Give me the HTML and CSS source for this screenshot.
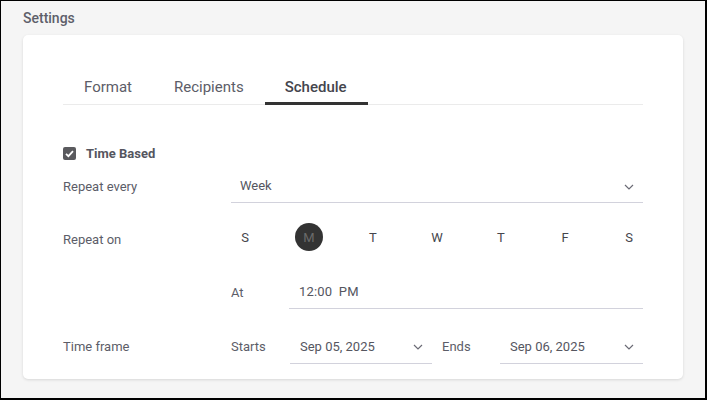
FILE: index.html
```html
<!DOCTYPE html>
<html>
<head>
<meta charset="utf-8">
<link rel="stylesheet" href="styles.css">
</head>
<body>
<div class="frame">
  <div class="page-title">Settings</div>
  <div class="card">
    <div class="tabs">
      <div class="tab">Format</div>
      <div class="tab">Recipients</div>
      <div class="tab active">Schedule</div>
    </div>
    <div class="form">
      <div class="check-row">
        <span class="checkbox"><svg width="13" height="13" viewBox="0 0 13 13"><path d="M3 6.8 L5.4 9.1 L10 4.2" fill="none" stroke="#fff" stroke-width="1.8"/></svg></span>
        <span class="check-label">Time Based</span>
      </div>
      <div class="row row-every">
        <div class="label">Repeat every</div>
        <div class="field select"><span>Week</span><svg class="chev" width="10" height="6" viewBox="0 0 10 6"><path d="M1 1 L5 5 L9 1" fill="none" stroke="#6b6b75" stroke-width="1.2"/></svg></div>
      </div>
      <div class="row row-on">
        <div class="label label-on">Repeat on</div>
        <div class="days">
          <span class="day">S</span>
          <span class="day selected">M</span>
          <span class="day">T</span>
          <span class="day">W</span>
          <span class="day">T</span>
          <span class="day">F</span>
          <span class="day">S</span>
        </div>
      </div>
      <div class="row row-at">
        <div class="label"></div>
        <div class="inline">
          <span class="sub-label">At</span>
          <div class="field grow"><span class="time">12:00 PM</span></div>
        </div>
      </div>
      <div class="row row-frame">
        <div class="label">Time frame</div>
        <div class="inline">
          <span class="sub-label">Starts</span>
          <div class="field date"><span>Sep 05, 2025</span><svg class="chev" width="10" height="6" viewBox="0 0 10 6"><path d="M1 1 L5 5 L9 1" fill="none" stroke="#6b6b75" stroke-width="1.2"/></svg></div>
          <span class="sub-label ends">Ends</span>
          <div class="field date"><span>Sep 06, 2025</span><svg class="chev" width="10" height="6" viewBox="0 0 10 6"><path d="M1 1 L5 5 L9 1" fill="none" stroke="#6b6b75" stroke-width="1.2"/></svg></div>
        </div>
      </div>
    </div>
  </div>
</div>
</body>
</html>
```
FILE: styles.css
```css
* { box-sizing: border-box; }
html, body { margin: 0; padding: 0; }
body {
  font-family: Roboto, "Liberation Sans", Arial, sans-serif;
  color: #5c5d68;
}
.frame {
  width: 707px;
  height: 400px;
  background: #f5f5f5;
  border-style: solid;
  border-color: #000;
  border-width: 1px 2px 2px 1px;
  padding: 7px 0 0 22px;
}
.page-title {
  font-size: 14px;
  font-weight: 500;
  line-height: 20px;
  color: #5e5f6a;
}
.card {
  margin-top: 7px;
  width: 660px;
  height: 344px;
  background: #fff;
  border-radius: 5px;
  box-shadow: 0 1px 3px rgba(0,0,0,0.12);
  padding: 42px 40px 0 40px;
}
.tabs {
  display: flex;
  border-bottom: 1px solid #ebebeb;
}
.tab {
  font-size: 15px;
  line-height: 20px;
  padding: 0 21px 7px 21px;
  color: #5c5d68;
}
.tab.active {
  font-weight: 500;
  color: #44454d;
  padding-bottom: 4px;
  border-bottom: 3px solid #333;
  margin-bottom: -1px;
  padding-left: 20px;
  padding-right: 21px;
}
.form {
  font-size: 13px;
}
.check-row {
  display: flex;
  align-items: center;
  height: 20px;
  margin-top: 38px;
}
.checkbox {
  width: 13px;
  height: 13px;
  border-radius: 2px;
  background: #5a5a5e;
  display: inline-flex;
}
.check-label {
  margin-left: 10px;
  font-weight: 700;
  color: #55565f;
}
.row {
  display: grid;
  grid-template-columns: 168px 412px;
  align-items: center;
}
.row-every { margin-top: 8px; }
.row-on { margin-top: 20px; }
.row-at { margin-top: 26px; }
.row-frame { margin-top: 23px; }
.label { line-height: 16px; }
.label-on { position: relative; top: 3px; }
.row-frame .label { padding-bottom: 2px; }
.field {
  height: 32px;
  border-bottom: 1px solid #d2d2dc;
  display: flex;
  align-items: center;
  justify-content: space-between;
  padding: 0 9px 2px 10px;
  color: #55565f;
}
.date { padding-bottom: 3px; }
.select { padding-left: 9px; }
.chev { display: block; margin-top: 2px; }
.time { word-spacing: 3px; letter-spacing: 0.2px; }
.days {
  display: flex;
  justify-content: space-between;
}
.day {
  width: 28px;
  height: 28px;
  border-radius: 50%;
  display: flex;
  align-items: center;
  justify-content: center;
  color: #45464d;
}
.day.selected {
  background: #333;
  color: #6a6a6a;
}
.inline {
  display: flex;
  align-items: center;
}
.sub-label {
  width: 58px;
  flex: none;
  padding-bottom: 2px;
}
.row-frame .sub-label { width: 59px; padding-bottom: 4px; }
.row-frame .sub-label.ends { width: 58px; }
.grow { flex: 1; }
.date { width: 142px; flex: none; }
.date + .sub-label { margin-left: 10px; }
.date:last-child { width: 143px; }
```
